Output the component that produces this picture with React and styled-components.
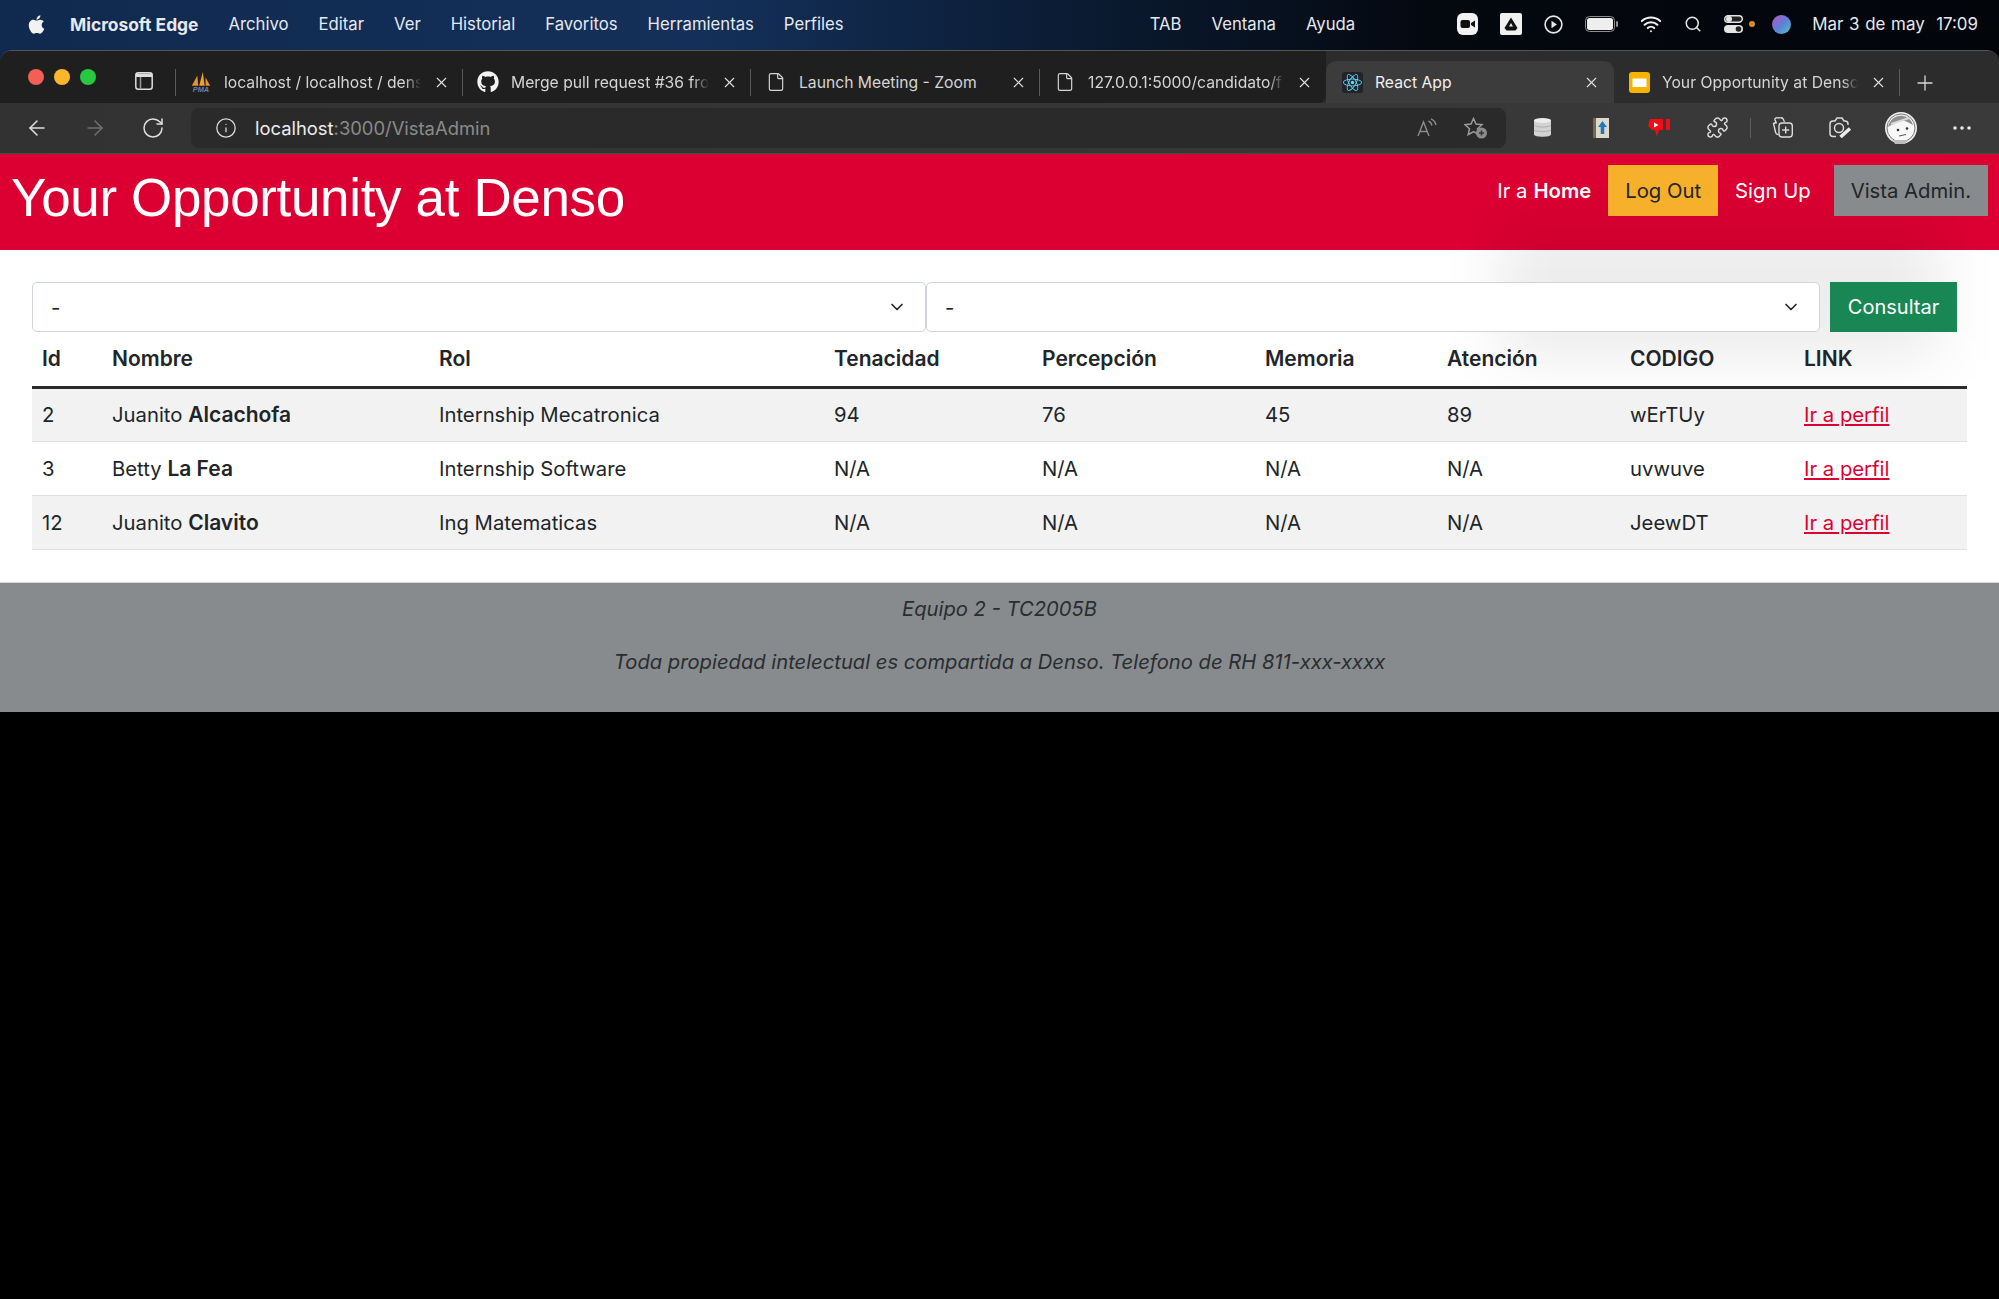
import React from 'react';
import styled, { createGlobalStyle } from 'styled-components';
import { ArrowLeft, ArrowRight, RotateCw, Info, X, Plus, File, Search, Wifi, Puzzle, ChevronDown } from 'lucide-react';
import { FaApple, FaGithub, FaReact } from 'react-icons/fa';

const GlobalStyle = createGlobalStyle`
  html, body {
    margin: 0;
    background: #000;
    font-family: Inter, "Noto Sans", sans-serif;
  }
  * { box-sizing: border-box; }
`;

const Screen = styled.div`
  width: 1999px;
  height: 1299px;
  overflow: hidden;
  background: #000;
`;

const Desktop = styled.div`
  background: linear-gradient(90deg, #10294e 0%, #14305a 35%, #0a1a30 55%, #04080f 72%, #02050a 100%);
`;

const MenuBar = styled.div`
  height: 50px;
  display: flex;
  align-items: center;
  padding: 0 21px 2px 26px;
  color: #e6e9ee;
  font-size: 16.7px;
`;

const AppleMark = styled.span`
  display: flex;
  margin-right: 23px;
  font-size: 21px;
  color: #f2f2f2;
`;

const MenuItem = styled.span`
  margin-right: ${(p) => p.$gap || 30}px;
  font-weight: ${(p) => (p.$bold ? 700 : 400)};
  font-size: ${(p) => (p.$bold ? 17.4 : 16.7)}px;
  white-space: nowrap;
`;

const Spacer = styled.div`
  flex: 1;
`;

const StatusIcons = styled.div`
  display: flex;
  align-items: center;
  gap: 22px;
  margin-right: 21px;
  height: 22px;
`;

const StatusClock = styled.span`
  white-space: nowrap;
  font-size: 16.9px;
  word-spacing: 1px;
`;

const Chrome = styled.div`
  overflow: hidden;
  background: #2c2c2c;
  border-radius: 12px 12px 0 0;
  border-top: 1px solid #555;
`;

const TabStrip = styled.div`
  height: 52px;
  display: flex;
  align-items: flex-end;
  background: #2c2c2c;
`;

const LeftCap = styled.div`
  display: flex;
  align-items: flex-end;
  background: #1f1f1f;
  border-radius: 0 0 8px 0;
`;

const Lights = styled.div`
  position: relative;
  width: 176px;
  height: 52px;
  display: flex;
  align-items: center;
  gap: 10px;
  padding-left: 28px;
  &::after {
    content: '';
    position: absolute;
    right: 0;
    top: 18px;
    height: 27px;
    width: 1px;
    background: #5a5a5a;
  }
`;

const Light = styled.span`
  width: 16px;
  height: 16px;
  border-radius: 50%;
  background: ${(p) => p.$color};
`;

const SidebarSlot = styled.span`
  display: flex;
  margin: 8px 0 0 29px;
`;

const Tab = styled.div`
  width: ${(p) => p.$width}px;
  height: 42px;
  display: flex;
  align-items: center;
  padding: ${(p) => (p.$active ? '0 14px 0 15px' : '0 13px 0 14px')};
  color: ${(p) => (p.$active ? '#f0f0f0' : '#d5d5d5')};
  font-size: 15.7px;
  background: ${(p) => (p.$active ? '#3c3c3c' : 'transparent')};
  border-radius: ${(p) => (p.$active ? '10px 10px 0 0' : '0')};
  position: relative;
  &::after {
    content: '';
    display: ${(p) => (p.$divider ? 'block' : 'none')};
    position: absolute;
    right: 0;
    top: 8px;
    height: 27px;
    width: 1px;
    background: #5a5a5a;
  }
`;

const TabIcon = styled.span`
  width: 22px;
  display: flex;
  justify-content: center;
  margin-right: 12px;
  flex: none;
`;

const ReactBadge = styled.span`
  display: flex;
  padding: 1px;
  background: #20232a;
  border-radius: 3px;
`;

const TabTitle = styled.span`
  flex: 1;
  min-width: 0;
  white-space: nowrap;
  margin-right: 12px;
  ${(p) => p.$fade && 'mask-image: linear-gradient(90deg, #000 92%, transparent 100%);'}
`;

const CloseBox = styled.span`
  display: flex;
  flex: none;
  color: #e2e2e2;
`;

const NewTab = styled.span`
  display: flex;
  margin: 0 0 8px 13px;
  color: #d8d8d8;
  align-self: flex-end;
`;

const Toolbar = styled.div`
  height: 51px;
  display: flex;
  align-items: center;
  padding: 0 28px 1px 25px;
  background: linear-gradient(90deg, #323232, #3a3a3a);
  border-bottom: 1px solid #484848;
  color: #dcdcdc;
`;

const NavButton = styled.span`
  display: flex;
  margin-right: ${(p) => p.$gap}px;
  color: ${(p) => p.$color || '#e0e0e0'};
`;

const AddressBar = styled.div`
  width: 1315px;
  height: 40px;
  display: flex;
  align-items: center;
  padding: 0 18px 0 24px;
  background: #2a2a2a;
  border-radius: 8px;
  font-size: 18.4px;
`;

const Host = styled.span`
  color: #ececec;
  margin-left: 18px;
`;

const Path = styled.span`
  color: #8a8a8a;
`;

const AddressIcons = styled.div`
  display: flex;
  align-items: center;
  gap: 26px;
`;

const ToolSlot = styled.span`
  display: flex;
  align-items: center;
  margin-left: ${(p) => p.$gap}px;
`;

const ToolDivider = styled.span`
  width: 1px;
  height: 20px;
  background: #5c5c5c;
`;

const Page = styled.div`
  position: relative;
  background: #fff;
`;

const Navbar = styled.header`
  height: 96px;
  display: flex;
  align-items: flex-start;
  justify-content: space-between;
  background: #dc0032;
  padding: 11px 11px 0 11px;
`;

const Brand = styled.h1`
  margin: 1px 0 0;
  color: #fff;
  font-family: "Liberation Sans", Arial, sans-serif;
  font-size: 53px;
  font-weight: 400;
  letter-spacing: -0.35px;
  line-height: 64px;
  white-space: nowrap;
`;

const NavLinks = styled.nav`
  position: relative;
  z-index: 2;
  display: flex;
  align-items: stretch;
  height: 51px;
`;

const NavLink = styled.a`
  display: flex;
  align-items: center;
  padding: 0 ${(p) => p.$padRight || 17}px 0 17px;
  font-size: 20.3px;
  color: ${(p) => p.$color || '#fff'};
  background: ${(p) => p.$bg || 'transparent'};
  white-space: nowrap;
  b { margin-left: 6px; font-weight: 600; }
`;

const MenuShadow = styled.div`
  position: absolute;
  left: 1500px;
  top: 66px;
  width: 440px;
  height: 140px;
  background: rgba(0, 0, 0, 0.07);
  filter: blur(28px);
  pointer-events: none;
`;

const Content = styled.main`
  position: relative;
  padding: 32px 32px 32px;
`;

const FilterRow = styled.div`
  display: flex;
  height: 50px;
`;

const Select = styled.div`
  width: ${(p) => p.$width}px;
  display: flex;
  align-items: center;
  justify-content: space-between;
  padding: 0 18px;
  background: #fff;
  border: 1px solid #ced4da;
  border-radius: 5px;
  font-size: 20.4px;
  color: #212529;
  margin-right: ${(p) => p.$gap || 0}px;
`;

const SubmitButton = styled.button`
  width: 127px;
  border: 0;
  padding: 0;
  background: #198754;
  color: #fff;
  font: 400 20px Inter, sans-serif;
`;

const Table = styled.table`
  width: 100%;
  border-collapse: collapse;
  table-layout: fixed;
  color: #212529;
  font-size: 20.3px;
`;

const HeadCell = styled.th`
  height: 55px;
  padding: 0 10px;
  text-align: left;
  font-size: 21px;
  font-weight: 600;
  border-bottom: 3px solid #2b2b2b;
`;

const Row = styled.tr`
  background: ${(p) => (p.$odd ? '#f2f2f2' : '#fff')};
  border-bottom: 1px solid #dee2e6;
`;

const Cell = styled.td`
  height: 54px;
  padding: 0 10px;
  white-space: nowrap;
  b { font-size: 21px; font-weight: 600; }
`;

const ProfileLink = styled.a`
  color: #dc0032;
  text-decoration: underline;
`;

const Footer = styled.footer`
  height: 130px;
  background: #878b8d;
  border-top: 1px solid #d8d8d8;
  padding-top: 13px;
  color: #2a2d30;
  font-size: 20.2px;
  font-style: italic;
  text-align: center;
  p { margin: 0 0 27px; line-height: 26px; }
`;

const OrangeDot = styled.span`
  width: 6px;
  height: 6px;
  border-radius: 50%;
  background: #d98a2b;
  margin: 0 -5px 0 -16px;
`;

const ZoomIcon = () => (
  <svg width="21" height="22" viewBox="0 0 21 22">
    <rect width="21" height="22" rx="6" fill="#f1f1f1" />
    <rect x="3.500" y="7" width="9.500" height="8" rx="2" fill="#111" />
    <path d="M14 10l4-2.500v7L14 12z" fill="#111" />
  </svg>
);

const DriveIcon = () => (
  <svg width="22" height="22" viewBox="0 0 22 22">
    <rect width="22" height="22" rx="2" fill="#f1f1f1" />
    <path d="M11 4.500l6.500 10.500-2 2.500h-9l-2-2.500z" fill="#111" />
    <path d="M11 10l-2 3.500h4z" fill="#f1f1f1" />
  </svg>
);

const PlayIcon = () => (
  <svg width="19" height="19" viewBox="0 0 19 19">
    <circle cx="9.500" cy="9.500" r="8.400" fill="none" stroke="#e8e8e8" strokeWidth="1.600" />
    <path d="M7.500 5.800l5.400 3.700-5.400 3.700z" fill="#e8e8e8" />
  </svg>
);

const BatteryIcon = () => (
  <svg width="33" height="16" viewBox="0 0 33 16">
    <rect x="0.500" y="0.500" width="29" height="15" rx="4" fill="none" stroke="#8d8d8d" />
    <rect x="2" y="2" width="26" height="12" rx="2.500" fill="#eee" />
    <rect x="31" y="5" width="2" height="6" rx="1" fill="#8d8d8d" />
  </svg>
);

const ControlIcon = () => (
  <svg width="19" height="18" viewBox="0 0 19 18">
    <rect x="0.700" y="0.700" width="17.600" height="6.600" rx="3.300" fill="#222" stroke="#e4e4e4" strokeWidth="1.400" />
    <circle cx="5" cy="4" r="3" fill="#e4e4e4" />
    <rect x="0" y="10" width="19" height="8" rx="4" fill="#e4e4e4" />
    <circle cx="14.500" cy="14" r="2.800" fill="#222" />
  </svg>
);

const SiriIcon = () => (
  <svg width="19" height="19" viewBox="0 0 19 19">
    <defs>
      <linearGradient id="siri" x1="0" y1="0" x2="1" y2="1">
        <stop offset="0" stopColor="#c04fb8" />
        <stop offset="0.5" stopColor="#5f7fd8" />
        <stop offset="1" stopColor="#48c7c0" />
      </linearGradient>
    </defs>
    <circle cx="9.500" cy="9.500" r="9.500" fill="url(#siri)" />
  </svg>
);

const SidebarIcon = () => (
  <svg width="18" height="18" viewBox="0 0 18 18" fill="none" stroke="#dedede" strokeWidth="1.500">
    <rect x="0.800" y="0.800" width="16.400" height="16.400" rx="2.500" />
    <path d="M1 3.200h16" strokeWidth="3.500" />
    <path d="M5.500 5v12" stroke="#9a9a9a" />
  </svg>
);

const PmaIcon = () => (
  <svg width="24" height="22" viewBox="0 0 24 22">
    <path d="M2 15L8 4l1 11z" fill="#e8912d" />
    <path d="M10 15L14 0l2 15z" fill="#f0a030" />
    <path d="M17 15l0-9 5 9z" fill="#e8912d" />
    <text x="12" y="21.500" textAnchor="middle" fontFamily="Liberation Sans" fontSize="8" fontWeight="700" fontStyle="italic" fill="#6d7fb3">PMA</text>
  </svg>
);

const SlidesIcon = () => (
  <svg width="21" height="21" viewBox="0 0 21 21">
    <rect width="21" height="21" rx="3" fill="#f4b400" />
    <rect x="3.500" y="6.500" width="14" height="8.500" fill="#fff" />
  </svg>
);

const ReadAloudIcon = () => (
  <svg width="21" height="19" viewBox="0 0 21 19" fill="none" stroke="#8c8c8c" strokeWidth="1.400">
    <path d="M1 18L6.500 4 12 18M3 13.500h7" />
    <path d="M11.500 3c2 .800 3 2.200 3.500 4.500M14 .800c2.500 1.200 4.500 3.500 5 6.200" />
  </svg>
);

const FavoriteIcon = () => (
  <svg width="24" height="22" viewBox="0 0 24 22" fill="none" stroke="#9a9a9a" strokeWidth="1.500">
    <path d="M9.500 1.500l2.500 5.600 6 .6-4.500 4 1.300 6-5.300-3.100-5.300 3.100 1.300-6-4.500-4 6-.6z" />
    <circle cx="17.500" cy="16" r="5.500" fill="#8c8c8c" stroke="none" />
    <path d="M17.500 13.500v5M15 16h5" stroke="#333" />
  </svg>
);

const DatabaseIcon = () => (
  <svg width="19" height="21" viewBox="0 0 19 21">
    <path d="M1 3.500C1 1 18 1 18 3.500v14C18 20.500 1 20.500 1 17.500z" fill="#d2d2d2" />
    <ellipse cx="9.500" cy="3.500" rx="8.500" ry="2.500" fill="#ececec" />
    <path d="M1 8.500c3 2 14 2 17 0M1 13c3 2 14 2 17 0" fill="none" stroke="#b0b0b0" />
  </svg>
);

const BookIcon = () => (
  <svg width="16" height="20" viewBox="0 0 16 20">
    <rect width="16" height="20" fill="#dedacb" />
    <rect x="0" y="0" width="3" height="20" fill="#77684d" />
    <path d="M9.500 3l4.500 6h-2.700v7H7.700V9H5z" fill="#2476c3" />
  </svg>
);

const RedFlagIcon = () => (
  <svg width="22" height="19" viewBox="0 0 22 19">
    <path d="M2 1h13v11h-4l-2 7-2-7H4L0 8z" fill="#f00d14" />
    <path d="M6 4.500l4.500 2.500L6 9.500z" fill="#fff" />
    <rect x="18" y="1" width="4" height="11" fill="#f00d14" />
  </svg>
);

const CollectionsIcon = () => (
  <svg width="21" height="21" viewBox="0 0 21 21" fill="none" stroke="#dcdcdc" strokeWidth="1.400">
    <path d="M4.500 6.500L3 2.800a1.500 1.500 0 0 1 1-1.900L9 .8a2 2 0 0 1 2 1l1.500 3" />
    <path d="M4 5.500L1.500 6.500 3.500 15a3 3 0 0 0 3 2.500" />
    <rect x="7" y="6" width="13.300" height="14" rx="3" />
    <path d="M13.700 9.500v7M10.200 13h7" />
  </svg>
);

const CaptureIcon = () => (
  <svg width="23" height="21" viewBox="0 0 23 21" fill="none" stroke="#dcdcdc" strokeWidth="1.500">
    <path d="M7 19.500H4a3 3 0 0 1-3-3V7a3 3 0 0 1 3-3h2l2-3h5l2 3h1a3 3 0 0 1 3 3v1" />
    <circle cx="10" cy="11" r="4.500" />
    <path d="M11.500 20l9.500-8.500" strokeWidth="3.500" stroke="#ececec" />
  </svg>
);

const AvatarIcon = () => (
  <svg width="32" height="32" viewBox="0 0 32 32">
    <circle cx="16" cy="16" r="16" fill="#ededed" />
    <circle cx="16" cy="16" r="14" fill="#f8f8f8" stroke="#555" strokeWidth="0.800" />
    <path d="M3 15C5 7 11 3 18 4c6 1 9 5 10 9-6-4-10-5-13-4-4 1-8 4-12 6z" fill="#8e8e8e" />
    <path d="M6 12l18-6" stroke="#d8d8d8" strokeWidth="2" />
    <circle cx="13" cy="18" r="1.300" fill="#333" />
    <circle cx="22" cy="16.500" r="1.300" fill="#333" />
    <path d="M14 24l7-1.500" stroke="#555" />
    <path d="M8 28l14 0-2 4h-10z" fill="#bdbdbd" />
  </svg>
);

const MoreIcon = () => (
  <svg width="18" height="4" viewBox="0 0 18 4" fill="#e8e8e8">
    <circle cx="2" cy="2" r="1.800" />
    <circle cx="9" cy="2" r="1.800" />
    <circle cx="16" cy="2" r="1.800" />
  </svg>
);

const tabs = [
  { title: 'localhost / localhost / dens', icon: <PmaIcon />, width: 287, fade: true, divider: true },
  { title: 'Merge pull request #36 fro', icon: <FaGithub size={22} color="#f2f2f2" />, width: 288, fade: true, divider: true },
  { title: 'Launch Meeting - Zoom', icon: <File size={20} strokeWidth={1.4} />, width: 289, divider: true },
  { title: '127.0.0.1:5000/candidato/f', icon: <File size={20} strokeWidth={1.4} />, width: 286, fade: true },
];

const rows = [
  { id: 2, first: 'Juanito', last: 'Alcachofa', rol: 'Internship Mecatronica', scores: ['94', '76', '45', '89'], code: 'wErTUy' },
  { id: 3, first: 'Betty', last: 'La Fea', rol: 'Internship Software', scores: ['N/A', 'N/A', 'N/A', 'N/A'], code: 'uvwuve' },
  { id: 12, first: 'Juanito', last: 'Clavito', rol: 'Ing Matematicas', scores: ['N/A', 'N/A', 'N/A', 'N/A'], code: 'JeewDT' },
];

const columns = [
  ['Id', 70], ['Nombre', 327], ['Rol', 395], ['Tenacidad', 208], ['Percepción', 223],
  ['Memoria', 182], ['Atención', 183], ['CODIGO', 174], ['LINK', 173],
];

const BrowserTab = ({ title, icon, width, fade, divider, active }) => (
  <Tab $width={width} $divider={divider} $active={active}>
    <TabIcon>{icon}</TabIcon>
    <TabTitle $fade={fade}>{title}</TabTitle>
    <CloseBox><X size={17} strokeWidth={1.5} /></CloseBox>
  </Tab>
);

export default function App() {
  return (
    <Screen>
      <GlobalStyle />
      <Desktop>
        <MenuBar>
          <AppleMark><FaApple /></AppleMark>
          <MenuItem $bold>Microsoft Edge</MenuItem>
          <MenuItem>Archivo</MenuItem>
          <MenuItem>Editar</MenuItem>
          <MenuItem>Ver</MenuItem>
          <MenuItem>Historial</MenuItem>
          <MenuItem>Favoritos</MenuItem>
          <MenuItem>Herramientas</MenuItem>
          <MenuItem>Perfiles</MenuItem>
          <Spacer />
          <MenuItem>TAB</MenuItem>
          <MenuItem>Ventana</MenuItem>
          <MenuItem $gap={102}>Ayuda</MenuItem>
          <StatusIcons>
            <ZoomIcon />
            <DriveIcon />
            <PlayIcon />
            <BatteryIcon />
            <Wifi size={22} color="#f0f0f0" strokeWidth={2.2} />
            <Search size={18} color="#e8e8e8" />
            <ControlIcon />
            <OrangeDot />
            <SiriIcon />
          </StatusIcons>
          <StatusClock>Mar 3 de may&nbsp;&nbsp;17:09</StatusClock>
        </MenuBar>
        <Chrome>
          <TabStrip>
            <LeftCap>
              <Lights>
                <Light $color="#f25f57" />
                <Light $color="#fbb62e" />
                <Light $color="#28c840" />
                <SidebarSlot><SidebarIcon /></SidebarSlot>
              </Lights>
              {tabs.map((tab) => <BrowserTab key={tab.title} {...tab} />)}
            </LeftCap>
            <BrowserTab active title="React App" width={288} icon={<ReactBadge><FaReact size={19} color="#61dafb" /></ReactBadge>} />
            <BrowserTab title="Your Opportunity at Denso" width={286} fade divider icon={<SlidesIcon />} />
            <NewTab><Plus size={24} strokeWidth={1.3} /></NewTab>
          </TabStrip>
          <Toolbar>
            <NavButton $gap={34}><ArrowLeft size={24} strokeWidth={1.5} /></NavButton>
            <NavButton $gap={34} $color="#6f6f6f"><ArrowRight size={24} strokeWidth={1.5} /></NavButton>
            <NavButton $gap={26}><RotateCw size={24} strokeWidth={1.5} /></NavButton>
            <AddressBar>
              <Info size={22} strokeWidth={1.4} color="#dcdcdc" />
              <Host>localhost<Path>:3000/VistaAdmin</Path></Host>
              <Spacer />
              <AddressIcons>
                <ReadAloudIcon />
                <FavoriteIcon />
              </AddressIcons>
            </AddressBar>
            <ToolSlot $gap={27}><DatabaseIcon /></ToolSlot>
            <ToolSlot $gap={41}><BookIcon /></ToolSlot>
            <ToolSlot $gap={39}><RedFlagIcon /></ToolSlot>
            <ToolSlot $gap={36}><Puzzle size={23} strokeWidth={1.5} /></ToolSlot>
            <ToolSlot $gap={21}><ToolDivider /></ToolSlot>
            <ToolSlot $gap={21}><CollectionsIcon /></ToolSlot>
            <ToolSlot $gap={36}><CaptureIcon /></ToolSlot>
            <ToolSlot $gap={33}><AvatarIcon /></ToolSlot>
            <ToolSlot $gap={36}><MoreIcon /></ToolSlot>
          </Toolbar>
        </Chrome>
      </Desktop>
      <Page>
        <Navbar>
          <Brand>Your Opportunity at Denso</Brand>
          <NavLinks>
            <NavLink>Ir a <b>Home</b></NavLink>
            <NavLink $bg="#f7b02c" $color="#212529">Log Out</NavLink>
            <NavLink $padRight={23}>Sign Up</NavLink>
            <NavLink $bg="#878b8d" $color="#212529">Vista Admin.</NavLink>
          </NavLinks>
        </Navbar>
        <MenuShadow />
        <Content>
          <FilterRow>
            <Select $width={894}>-<ChevronDown size={20} strokeWidth={2} /></Select>
            <Select $width={894} $gap={10}>-<ChevronDown size={20} strokeWidth={2} /></Select>
            <SubmitButton>Consultar</SubmitButton>
          </FilterRow>
          <Table>
            <colgroup>
              {columns.map(([name, width]) => <col key={name} style={{ width }} />)}
            </colgroup>
            <thead>
              <tr>
                {columns.map(([name]) => <HeadCell key={name}>{name}</HeadCell>)}
              </tr>
            </thead>
            <tbody>
              {rows.map((row, i) => (
                <Row key={row.id} $odd={i % 2 === 0}>
                  <Cell>{row.id}</Cell>
                  <Cell>{row.first} <b>{row.last}</b></Cell>
                  <Cell>{row.rol}</Cell>
                  {row.scores.map((score, j) => <Cell key={j}>{score}</Cell>)}
                  <Cell>{row.code}</Cell>
                  <Cell><ProfileLink>Ir a perfil</ProfileLink></Cell>
                </Row>
              ))}
            </tbody>
          </Table>
        </Content>
        <Footer>
          <p>Equipo 2 - TC2005B</p>
          <p>Toda propiedad intelectual es compartida a Denso. Telefono de RH 811-xxx-xxxx</p>
        </Footer>
      </Page>
    </Screen>
  );
}
